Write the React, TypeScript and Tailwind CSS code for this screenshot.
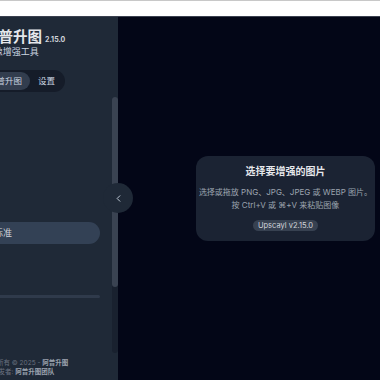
import { ChevronLeft } from 'lucide-react'

const font = { fontFamily: '"Inter", "Noto Sans CJK SC", sans-serif' }

export default function App() {
  return (
    <div className="w-[380px] h-[380px] overflow-hidden flex flex-col font-['Inter','Noto_Sans_CJK_SC',sans-serif]">
      <div className="h-[17px] shrink-0 bg-white border-t border-t-[#c8c8c8] border-b border-b-[#3b4150]" />

      <div className="flex-1 flex relative min-h-0">
        {/* Sidebar (scrolled horizontally, left part off-screen) */}
        <aside className="w-[118px] shrink-0 bg-[#1f2937] flex overflow-hidden">
          <div className="flex-1 min-w-0 flex flex-col whitespace-nowrap">
            <div className="mt-[11px] -ml-[16px] flex items-baseline gap-[3px]">
              <span className="text-[14.5px] leading-[18px] font-bold text-[#e5e7eb]">阿普升图</span>
              <span className="text-[7px] font-bold text-[#d1d5db]">2.15.0</span>
            </div>
            <div className="-ml-[24px] text-[9px] leading-[12px] text-[#cbd5e1]">AI图像增强工具</div>

            {/* Tabs */}
            <div className="mt-[12px] -ml-[40px] w-[105px] h-[22px] rounded-full bg-[#151c29] flex items-center p-[2px] text-[8.5px]">
              <div className="h-full w-[68px] rounded-full bg-[#323d4e] text-[#cbd5e1] flex items-center justify-end pr-[8px]">阿普升图</div>
              <div className="flex-1 text-[#cbd5e1] pl-[8px]">设置</div>
            </div>

            {/* Model select */}
            <div className="mt-[130px] -ml-[40px] w-[140px] h-[22px] rounded-full bg-[#334155] flex items-center justify-end pr-[88px] text-[9px] text-[#d1d5db]">
              标准
            </div>

            {/* Slider */}
            <div className="mt-[51px] -ml-[40px] w-[140px] h-[3px] rounded-full bg-[#2f3a4b]" />

            <div className="mt-auto mb-[3px] text-[6.5px] leading-[9px] text-[#6b7280]">
              <p className="-ml-[16px]">版权所有 © 2025 - <span className="font-bold text-[#9ca3af]">阿普升图</span></p>
              <p className="-ml-[8px]">开发者: <span className="font-bold text-[#9ca3af]">阿普升图团队</span></p>
            </div>
          </div>

          {/* Scrollbar */}
          <div className="w-[6px] shrink-0 mt-[80px] mb-[27px] rounded-full bg-[#19212f] flex flex-col">
            <div className="h-[190px] rounded-full bg-[#3a4352]" />
          </div>
        </aside>

        {/* Main area */}
        <main className="flex-1 min-w-0 bg-[#030617] flex items-center pl-[78px] pr-[5px]" style={font}>
          <div className="flex-1 min-w-0 h-[85px] rounded-[12px] bg-[#1b2333] flex flex-col items-center pt-[8px]">
            <h2 className="text-[10px] leading-[14px] font-bold text-[#e5e7eb]">选择要增强的图片</h2>
            <p className="mt-[8px] text-[8px] leading-[13px] text-[#9ca3af] text-center whitespace-nowrap">
              选择或拖放 PNG、JPG、JPEG 或 WEBP 图片。
              <br />
              按 Ctrl+V 或 ⌘+V 来粘贴图像
            </p>
            <span className="mt-[8px] h-[11px] px-[5px] rounded-full bg-[#374151] text-[7.5px] leading-[11px] text-[#d1d5db]">
              Upscayl v2.15.0
            </span>
          </div>
        </main>

        {/* Collapse button */}
        <button className="absolute left-[103px] top-[166px] w-[30px] h-[30px] rounded-full bg-[#1f2937] flex items-center justify-center text-[#cbd5e1]">
          <ChevronLeft size={11} strokeWidth={2} />
        </button>
      </div>
    </div>
  )
}
